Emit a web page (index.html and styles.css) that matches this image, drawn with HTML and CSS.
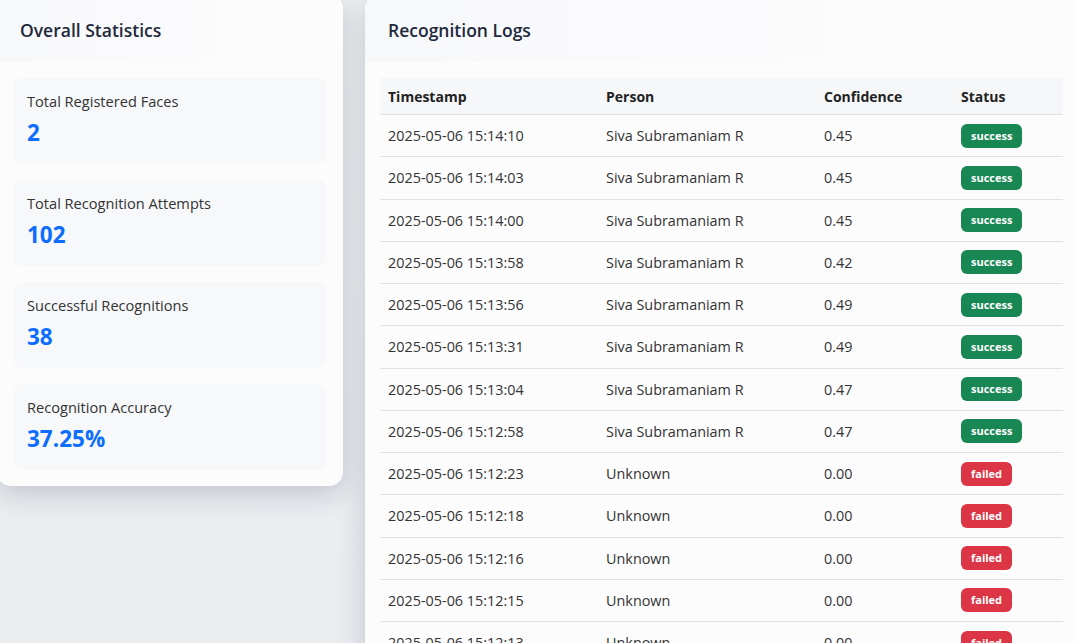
FILE: index.html
```html
<!DOCTYPE html>
<html lang="en">
<head>
<meta charset="utf-8">
<title>Recognition Dashboard</title>
<link rel="stylesheet" href="styles.css">
</head>
<body>
<div class="layout">
  <section class="card stats-card">
    <header class="card-header"><h2>Overall Statistics</h2></header>
    <div class="card-body stats-body">
      <div class="stat"><div class="stat-label">Total Registered Faces</div><div class="stat-value">2</div></div>
      <div class="stat"><div class="stat-label">Total Recognition Attempts</div><div class="stat-value">102</div></div>
      <div class="stat"><div class="stat-label">Successful Recognitions</div><div class="stat-value">38</div></div>
      <div class="stat"><div class="stat-label">Recognition Accuracy</div><div class="stat-value">37.25%</div></div>
    </div>
  </section>
  <section class="card logs-card">
    <header class="card-header"><h2>Recognition Logs</h2></header>
    <div class="card-body logs-body">
      <table class="logs">
        <thead>
          <tr><th class="c1">Timestamp</th><th class="c2">Person</th><th class="c3">Confidence</th><th class="c4">Status</th></tr>
        </thead>
        <tbody>
          <tr><td>2025-05-06 15:14:10</td><td>Siva Subramaniam R</td><td>0.45</td><td><span class="badge ok">success</span></td></tr>
          <tr><td>2025-05-06 15:14:03</td><td>Siva Subramaniam R</td><td>0.45</td><td><span class="badge ok">success</span></td></tr>
          <tr><td>2025-05-06 15:14:00</td><td>Siva Subramaniam R</td><td>0.45</td><td><span class="badge ok">success</span></td></tr>
          <tr><td>2025-05-06 15:13:58</td><td>Siva Subramaniam R</td><td>0.42</td><td><span class="badge ok">success</span></td></tr>
          <tr><td>2025-05-06 15:13:56</td><td>Siva Subramaniam R</td><td>0.49</td><td><span class="badge ok">success</span></td></tr>
          <tr><td>2025-05-06 15:13:31</td><td>Siva Subramaniam R</td><td>0.49</td><td><span class="badge ok">success</span></td></tr>
          <tr><td>2025-05-06 15:13:04</td><td>Siva Subramaniam R</td><td>0.47</td><td><span class="badge ok">success</span></td></tr>
          <tr><td>2025-05-06 15:12:58</td><td>Siva Subramaniam R</td><td>0.47</td><td><span class="badge ok">success</span></td></tr>
          <tr><td>2025-05-06 15:12:23</td><td>Unknown</td><td>0.00</td><td><span class="badge fail">failed</span></td></tr>
          <tr><td>2025-05-06 15:12:18</td><td>Unknown</td><td>0.00</td><td><span class="badge fail">failed</span></td></tr>
          <tr><td>2025-05-06 15:12:16</td><td>Unknown</td><td>0.00</td><td><span class="badge fail">failed</span></td></tr>
          <tr><td>2025-05-06 15:12:15</td><td>Unknown</td><td>0.00</td><td><span class="badge fail">failed</span></td></tr>
          <tr><td>2025-05-06 15:12:13</td><td>Unknown</td><td>0.00</td><td><span class="badge fail">failed</span></td></tr>
        </tbody>
      </table>
    </div>
  </section>
</div>
</body>
</html>
```
FILE: styles.css
```css
html, body {
  margin: 0;
  padding: 0;
  height: 100%;
  overflow: hidden;
}
body {
  background: linear-gradient(180deg, #eef0f3 0%, #eaecf0 100%);
  font-family: "Open Sans", "Noto Sans", sans-serif;
  color: #333;
}
.layout {
  display: flex;
  align-items: flex-start;
  gap: 22px;
  margin: -5px -10px 0 -3px;
}
.card {
  background: #fcfcfd;
  border-radius: 14px;
  box-shadow: 0 8px 28px rgba(30, 41, 59, 0.2);
  overflow: hidden;
}
.stats-card {
  width: 346px;
  flex: none;
}
.logs-card {
  flex: 1;
}
.card-header {
  height: 67px;
  display: flex;
  align-items: center;
  padding: 0 23px;
  box-sizing: border-box;
  background: linear-gradient(90deg, #f7f8fa, #fdfdfe);
}
.card-header h2 {
  margin: 2px 0 0;
  font-size: 17.5px;
  font-weight: 600;
  color: #1e293b;
}
.stats-body {
  padding: 16px;
  display: flex;
  flex-direction: column;
  gap: 16px;
}
.stat {
  background: #f7f8fa;
  border-radius: 10px;
  height: 86px;
  box-sizing: border-box;
  padding: 13px 14px 14px;
}
.stat-label {
  font-size: 14.6px;
  color: #333;
  line-height: 20px;
}
.stat-value {
  margin-top: 7px;
  font-size: 22.5px;
  font-weight: 700;
  color: #0d6efd;
  line-height: 30px;
}
.logs-body {
  padding: 16px 15px;
}
.logs {
  width: 683px;
  border-collapse: collapse;
  font-size: 14.4px;
}
.logs th, .logs td {
  text-align: left;
  padding: 0 8px;
  height: 41.25px;
  border-bottom: 1px solid #dee2e6;
}
.logs th {
  background: #f6f7f9;
  font-size: 14px;
  font-weight: 700;
  color: #222;
  height: 36px;
}
.c1 { width: 202px; }
.c2 { width: 202px; }
.c3 { width: 121px; }
.badge {
  display: inline-block;
  font-size: 11px;
  font-weight: 700;
  color: #fff;
  line-height: 24px;
  padding: 0 10px;
  border-radius: 6px;
  vertical-align: middle;
}
.badge.ok { background: #198754; }
.badge.fail { background: #dc3545; }
```
